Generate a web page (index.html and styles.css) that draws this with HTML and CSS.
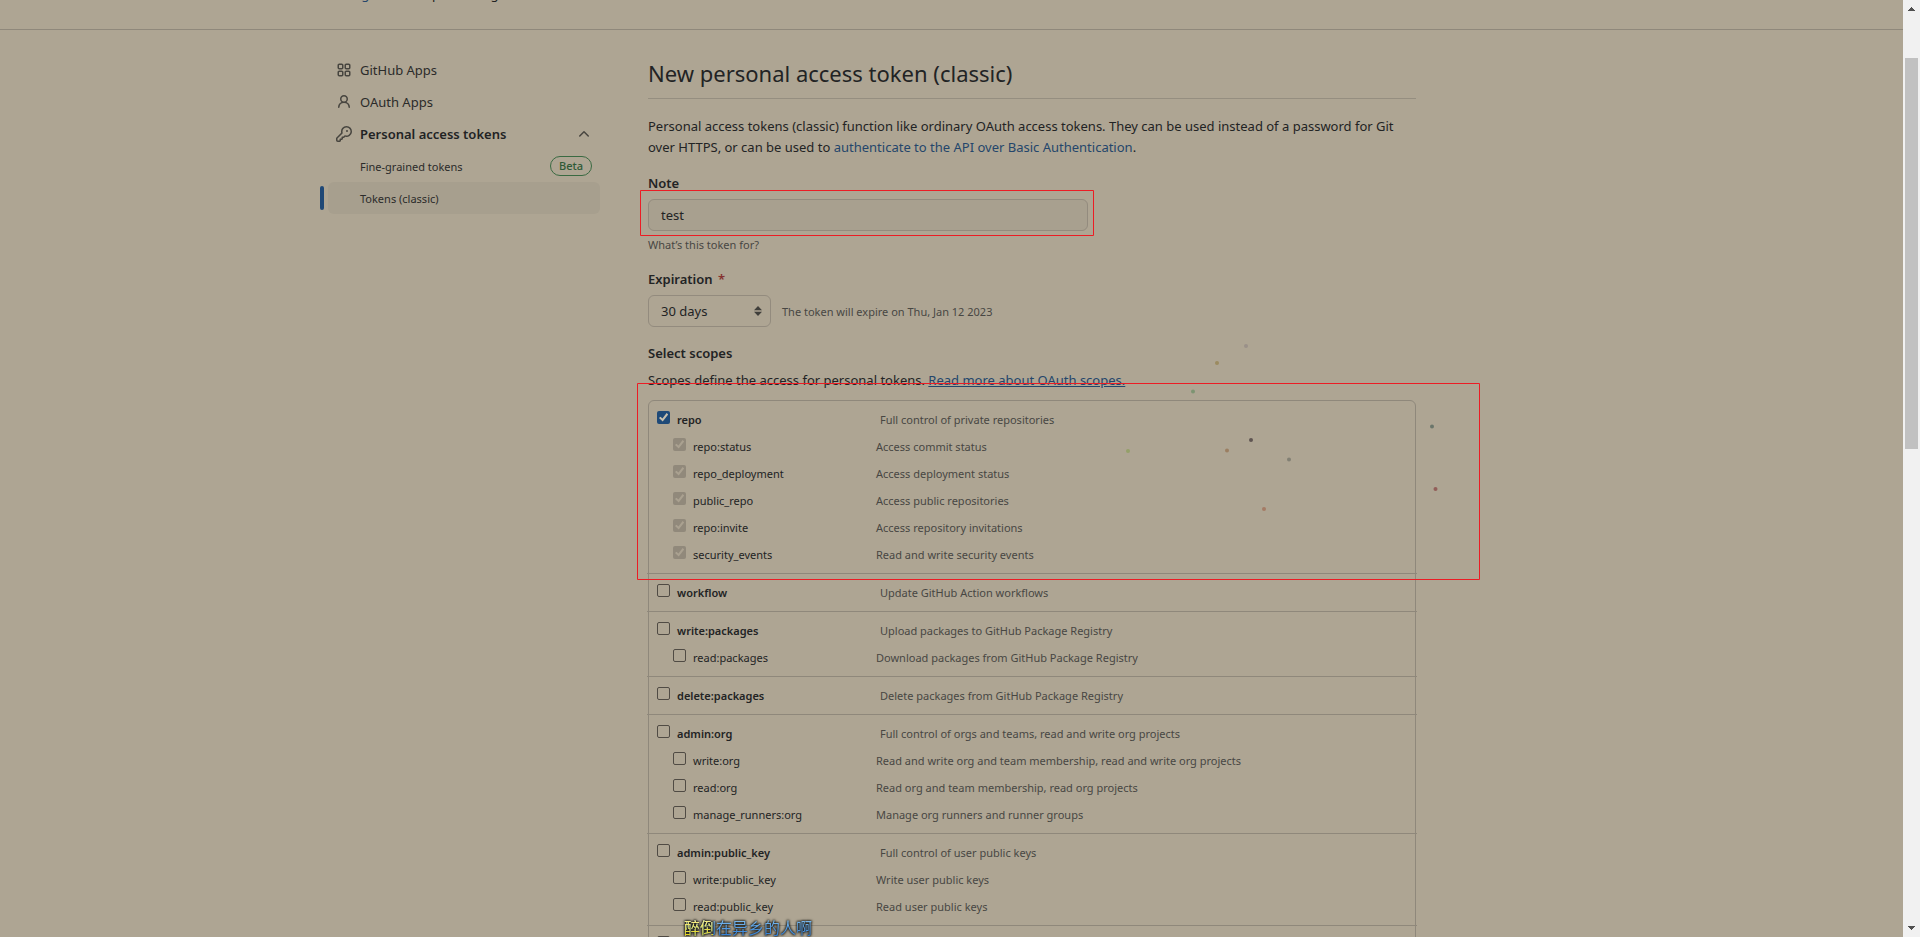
FILE: index.html
```html
<!DOCTYPE html>
<html lang="en">
<head>
<meta charset="utf-8">
<title>New personal access token (classic)</title>
<link rel="stylesheet" href="styles.css">
</head>
<body>
<div class="window">
  <div class="page">
    <header class="crumbs">
      <nav class="crumbs-inner"><a href="#">Settings</a><span>/</span><span>Developer settings</span></nav>
    </header>
    <div class="layout">
      <nav class="side">
        <a class="item" href="#">
          <svg class="icon" viewBox="0 0 16 16"><path d="M1.5 3.25c0-.966.784-1.75 1.75-1.75h2.5c.966 0 1.75.784 1.75 1.75v2.5A1.75 1.75 0 0 1 5.75 7.5h-2.5A1.75 1.75 0 0 1 1.5 5.75ZM3 3.25v2.5c0 .138.112.25.25.25h2.5A.25.25 0 0 0 6 5.75v-2.5A.25.25 0 0 0 5.75 3h-2.5A.25.25 0 0 0 3 3.25Zm5.5 0c0-.966.784-1.75 1.75-1.75h2.5c.966 0 1.75.784 1.75 1.75v2.5a1.75 1.75 0 0 1-1.75 1.75h-2.5A1.75 1.75 0 0 1 8.5 5.75Zm1.5 0v2.5c0 .138.112.25.25.25h2.5a.25.25 0 0 0 .25-.25v-2.5a.25.25 0 0 0-.25-.25h-2.5a.25.25 0 0 0-.25.25ZM1.5 10.25c0-.966.784-1.75 1.75-1.75h2.5c.966 0 1.75.784 1.75 1.75v2.5a1.75 1.75 0 0 1-1.75 1.75h-2.5a1.75 1.75 0 0 1-1.75-1.75Zm1.5 0v2.5c0 .138.112.25.25.25h2.5a.25.25 0 0 0 .25-.25v-2.5a.25.25 0 0 0-.25-.25h-2.5a.25.25 0 0 0-.25.25Zm5.5 0c0-.966.784-1.75 1.75-1.75h2.5c.966 0 1.75.784 1.75 1.75v2.5a1.75 1.75 0 0 1-1.75 1.75h-2.5a1.75 1.75 0 0 1-1.75-1.75Zm1.5 0v2.5c0 .138.112.25.25.25h2.5a.25.25 0 0 0 .25-.25v-2.5a.25.25 0 0 0-.25-.25h-2.5a.25.25 0 0 0-.25.25Z"/></svg>
          <span>GitHub Apps</span>
        </a>
        <a class="item" href="#">
          <svg class="icon" viewBox="0 0 16 16"><path d="M10.561 8.073a6.005 6.005 0 0 1 3.432 5.142.75.75 0 1 1-1.498.07 4.5 4.5 0 0 0-8.99 0 .75.75 0 0 1-1.498-.07 6.004 6.004 0 0 1 3.431-5.142 3.999 3.999 0 1 1 5.123 0ZM10.5 5a2.5 2.5 0 1 0-5 0 2.5 2.5 0 0 0 5 0Z"/></svg>
          <span>OAuth Apps</span>
        </a>
        <a class="item open" href="#">
          <svg class="icon" viewBox="0 0 16 16"><path d="M10.5 0a5.499 5.499 0 1 1-1.288 10.848l-.932.932a.749.749 0 0 1-.53.22H7v.75a.749.749 0 0 1-.22.53l-.5.5a.749.749 0 0 1-.53.22H5v.75a.749.749 0 0 1-.22.53l-.5.5a.749.749 0 0 1-.53.22h-2A1.75 1.75 0 0 1 0 14.25v-2c0-.199.079-.389.22-.53l4.932-4.932A5.5 5.5 0 0 1 10.5 0Zm-4 5.5c-.001.431.069.86.205 1.269a.75.75 0 0 1-.181.768L1.5 12.56v1.69c0 .138.112.25.25.25h1.69l.06-.06v-1.19a.75.75 0 0 1 .75-.75h1.19l.06-.06v-1.19a.75.75 0 0 1 .75-.75h1.19l1.023-1.025a.75.75 0 0 1 .768-.18A4 4 0 1 0 6.5 5.5ZM11 6a1 1 0 1 1 0-2 1 1 0 0 1 0 2Z"/></svg>
          <span class="grow">Personal access tokens</span>
          <svg class="icon" viewBox="0 0 16 16"><path d="M3.22 10.53a.749.749 0 0 1 0-1.06l4.25-4.25a.749.749 0 0 1 1.06 0l4.25 4.25a.749.749 0 1 1-1.06 1.06L8 6.811 4.28 10.53a.749.749 0 0 1-1.06 0Z"/></svg>
        </a>
        <a class="item sub" href="#"><span class="grow">Fine-grained tokens</span><span class="beta">Beta</span></a>
        <a class="item sub current" href="#"><span>Tokens (classic)</span></a>
      </nav>

      <main class="main">
        <h1>New personal access token (classic)</h1>
        <p class="intro">Personal access tokens (classic) function like ordinary OAuth access tokens. They can be used instead of a password for Git over HTTPS, or can be used to <a href="#">authenticate to the API over Basic Authentication</a>.</p>

        <div class="field">
          <label class="heading" for="note">Note</label>
          <input class="control note" id="note" type="text" value="test">
          <p class="hint">What’s this token for?</p>
        </div>

        <div class="field">
          <label class="heading" for="expiration">Expiration <span class="required">*</span></label>
          <div class="expiry">
            <div class="picker">
              <select class="control" id="expiration"><option>30 days</option></select>
              <svg class="arrows" viewBox="0 0 8 12"><path d="M4 1 8 5.2H0ZM0 6.8h8L4 11Z"/></svg>
            </div>
            <span class="muted">The token will expire on Thu, Jan 12 2023</span>
          </div>
        </div>

        <section class="scopes">
          <h2 class="heading">Select scopes</h2>
          <p class="about">Scopes define the access for personal tokens. <a href="#">Read more about OAuth scopes.</a></p>
          <ul class="groups">
            <li class="group">
              <div class="row top"><label><input type="checkbox" checked>repo</label><span>Full control of private repositories</span></div>
              <div class="row"><label><input type="checkbox" checked disabled>repo:status</label><span>Access commit status</span></div>
              <div class="row"><label><input type="checkbox" checked disabled>repo_deployment</label><span>Access deployment status</span></div>
              <div class="row"><label><input type="checkbox" checked disabled>public_repo</label><span>Access public repositories</span></div>
              <div class="row"><label><input type="checkbox" checked disabled>repo:invite</label><span>Access repository invitations</span></div>
              <div class="row"><label><input type="checkbox" checked disabled>security_events</label><span>Read and write security events</span></div>
            </li>
            <li class="group">
              <div class="row top"><label><input type="checkbox">workflow</label><span>Update GitHub Action workflows</span></div>
            </li>
            <li class="group">
              <div class="row top"><label><input type="checkbox">write:packages</label><span>Upload packages to GitHub Package Registry</span></div>
              <div class="row"><label><input type="checkbox">read:packages</label><span>Download packages from GitHub Package Registry</span></div>
            </li>
            <li class="group">
              <div class="row top"><label><input type="checkbox">delete:packages</label><span>Delete packages from GitHub Package Registry</span></div>
            </li>
            <li class="group">
              <div class="row top"><label><input type="checkbox">admin:org</label><span>Full control of orgs and teams, read and write org projects</span></div>
              <div class="row"><label><input type="checkbox">write:org</label><span>Read and write org and team membership, read and write org projects</span></div>
              <div class="row"><label><input type="checkbox">read:org</label><span>Read org and team membership, read org projects</span></div>
              <div class="row"><label><input type="checkbox">manage_runners:org</label><span>Manage org runners and runner groups</span></div>
            </li>
            <li class="group">
              <div class="row top"><label><input type="checkbox">admin:public_key</label><span>Full control of user public keys</span></div>
              <div class="row"><label><input type="checkbox">write:public_key</label><span>Write user public keys</span></div>
              <div class="row"><label><input type="checkbox">read:public_key</label><span>Read user public keys</span></div>
            </li>
            <li class="group">
              <div class="row top"><label><input type="checkbox" aria-label="More scopes"></label></div>
            </li>
          </ul>
        </section>
      </main>
    </div>
  </div>
  <div class="scrollbar">
    <svg class="tip" viewBox="0 0 7 4" shape-rendering="crispEdges"><path d="M3 0h1v1h1v1h1v1h1v1H0V3h1V2h1V1h1Z"/></svg>
    <div class="track"><div class="thumb"></div></div>
    <svg class="tip" viewBox="0 0 7 4" shape-rendering="crispEdges"><path d="M0 0h7v1H6v1H5v1H4v1H3V3H2V2H1V1H0Z"/></svg>
  </div>
  <svg class="marks" viewBox="0 0 1920 937">
    <g fill="none" stroke="#ec1c24"><path d="M640.5 190.5h453v45h-453ZM637.5 383.5h842v196h-842Z"/></g>
    <circle cx="1246" cy="346" r="2" fill="#9a9189"/>
    <circle cx="1217" cy="363" r="2" fill="#9b8b60"/>
    <circle cx="1193" cy="391.5" r="2" fill="#7d9472"/>
    <circle cx="1128" cy="451" r="2" fill="#94a069"/>
    <circle cx="1227" cy="450.5" r="2" fill="#9b7f62"/>
    <circle cx="1251" cy="440" r="2" fill="#5f5552"/>
    <circle cx="1289" cy="459.5" r="2" fill="#828074"/>
    <circle cx="1264" cy="509" r="2" fill="#a47b65"/>
    <circle cx="1432" cy="426.5" r="2" fill="#6b766b"/>
    <circle cx="1435.5" cy="489" r="2" fill="#925e59"/>
  </svg>
  <div class="lyric" lang="zh"><span>醉倒在异乡的人啊</span></div>
</div>
</body>
</html>
```
FILE: styles.css
```css
* { box-sizing: border-box; }

body {
  margin: 0;
  background: #aea593;
  color: #222324;
  font: 13px/21px "Noto Sans", sans-serif;
}

h1, h2, p, ul { margin: 0; padding: 0; }
a { color: #24466b; text-decoration: none; }

.window {
  position: relative;
  display: flex;
  height: 100vh;
  overflow: hidden;
}

.page { flex: 1; min-width: 0; margin-top: -34px; }

.crumbs {
  padding: 16px 0 23px;
  border-bottom: 1px solid #8f887b;
  line-height: 24px;
}
.crumbs-inner {
  display: flex;
  gap: 5px;
  max-width: 1263px;
  margin: 0 auto;
  padding: 0 6px;
}

.layout {
  display: grid;
  grid-template-columns: 280px minmax(0, 768px);
  column-gap: 48px;
  max-width: 1263px;
  margin: 0 auto;
  padding-top: 24px;
}

/* Sidebar */
.side { display: flex; flex-direction: column; padding-left: 8px; }
.item {
  position: relative;
  display: flex;
  align-items: center;
  gap: 8px;
  height: 32px;
  padding: 0 8px;
  border-radius: 6px;
  color: #2b2b2a;
}
.open { font-weight: 600; color: #222324; }
.sub { padding-left: 32px; font-size: 11px; }
.grow { flex: 1; }
.icon { width: 16px; height: 16px; fill: #47453f; }
.current { background: #a79f8e; }
.current::before {
  content: "";
  position: absolute;
  top: 4px;
  left: -8px;
  width: 4px;
  height: 24px;
  border-radius: 2px;
  background: #1f4876;
}
.beta {
  padding: 0 8px;
  border: 1px solid #3a6a42;
  border-radius: 10px;
  color: #2f5a37;
  font-weight: 500;
  line-height: 18px;
}

/* Form */
.main { padding-top: 2px; }
h1 {
  padding-bottom: 8px;
  border-bottom: 1px solid #958e80;
  font-size: 22px;
  font-weight: 400;
  line-height: 34px;
}
.intro { margin: 17px 0 15px; }
.field { margin-bottom: 15px; }
.heading {
  display: block;
  font-size: 13px;
  font-weight: 600;
  line-height: 21px;
}
.required { margin-left: 2px; color: #85312f; }
.control {
  appearance: none;
  height: 32px;
  padding: 0 12px;
  border: 1px solid #938b7e;
  border-radius: 6px;
  background: transparent;
  color: #222324;
  font: inherit;
}
.note { display: block; width: 440px; max-width: 100%; margin-top: 5px; background: #a8a08f; }
.hint { margin-top: 5px; color: #484743; font-size: 11px; line-height: 18px; }
.expiry { display: flex; align-items: center; gap: 11px; margin-top: 5px; }
.picker { position: relative; }
.picker .control { width: 123px; }
.arrows {
  position: absolute;
  top: 10px;
  right: 9px;
  width: 8px;
  height: 12px;
  fill: #403f3b;
  pointer-events: none;
}
.muted { color: #484743; font-size: 11px; }

/* Scopes */
.scopes { margin-top: 16px; }
.about { margin: 6px 0 9px; }
.about a { text-decoration: underline; }
.groups {
  list-style: none;
  border: 1px solid #8f887b;
  border-radius: 6px;
}
.group {
  margin: 0 -2px;
  padding: 5px 10px;
  border-bottom: 1px solid #8f887b;
}
.row {
  display: grid;
  grid-template-columns: 203px 1fr;
  padding-left: 16px;
  color: #484743;
  font-size: 11px;
  line-height: 27px;
}
.row.top { grid-template-columns: 223px 1fr; padding-left: 0; }
.row label { display: flex; gap: 7px; color: #222324; }
.top label { font-weight: 600; }
.row input {
  appearance: none;
  width: 13px;
  height: 13px;
  margin: 5px 0 0;
  border: 1px solid #504b44;
  border-radius: 2px;
}
.row input:checked { border: 0; background: #1f4a78; }
.row input:checked::before {
  content: "";
  display: block;
  height: 13px;
  background: #c8c0ae;
  clip-path: polygon(15% 54%, 27% 44%, 42% 58%, 74% 16%, 86% 27%, 44% 81%);
}
.row input:disabled { background: #91897b; }
.row input:disabled::before { background: #aaa190; }

/* Window scrollbar */
.scrollbar {
  display: flex;
  flex-direction: column;
  align-items: center;
  width: 17px;
  padding: 7px 0;
  background: #f1f1f1;
}
.tip { width: 7px; height: 4px; fill: #505050; }
.track { flex: 1; width: 13px; padding-top: 47px; }
.thumb { height: 45%; background: #c1c1c1; }

/* Annotations over the window */
.marks {
  position: absolute;
  top: 0;
  left: 0;
  width: 1920px;
  height: 937px;
  pointer-events: none;
}
.lyric {
  position: absolute;
  bottom: 0;
  left: 684px;
  filter: drop-shadow(0 0 1px #14140f) drop-shadow(0 0 1px #14140f);
  font: 16px/20px "Noto Sans CJK SC", sans-serif;
}
.lyric span {
  display: block;
  background:
    linear-gradient(#fff6a0, #e0cf10) 0 0 / 29px 100% no-repeat,
    linear-gradient(#8cc8f5, #2b78d0);
  background-clip: text;
  color: transparent;
}
```
